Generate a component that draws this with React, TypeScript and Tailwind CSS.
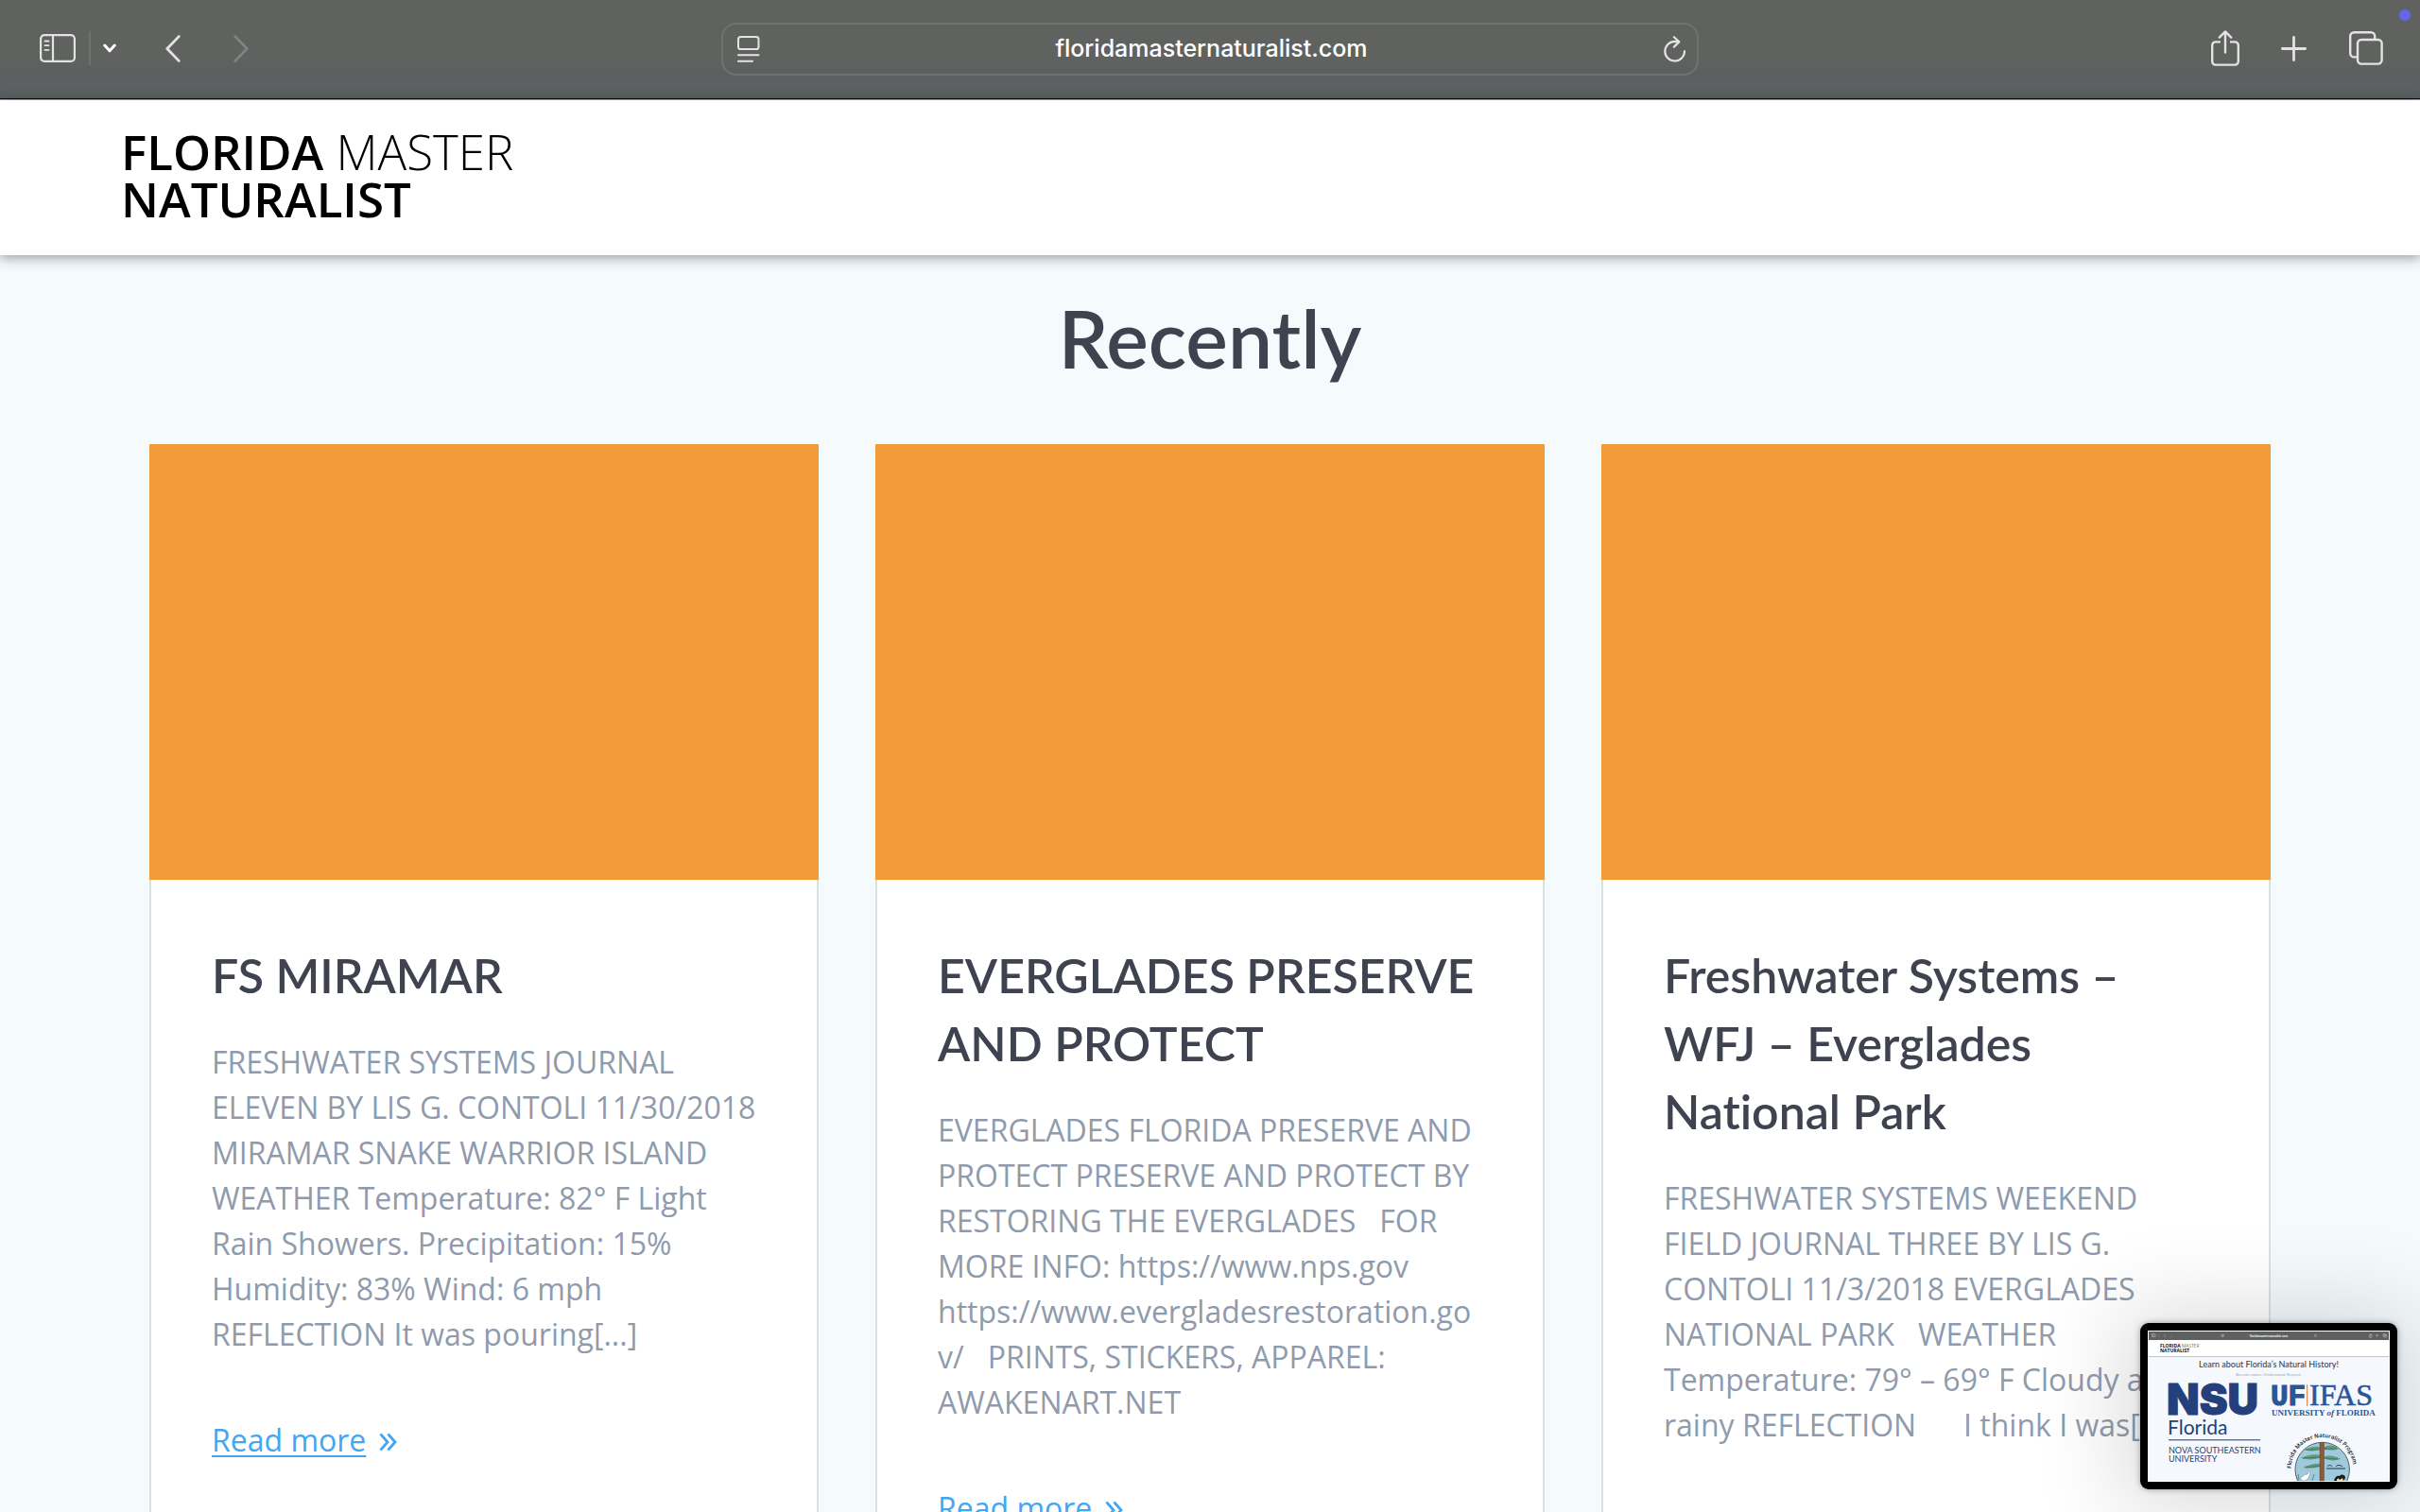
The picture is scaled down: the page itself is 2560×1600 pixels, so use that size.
import type { ReactNode } from "react";

type Post = { title: string; body: ReactNode };

const NB = "\u00a0";

const posts: Post[] = [
  {
    title: "FS MIRAMAR",
    body: "FRESHWATER SYSTEMS JOURNAL ELEVEN BY LIS G. CONTOLI 11/30/2018 MIRAMAR SNAKE WARRIOR ISLAND WEATHER Temperature: 82° F Light Rain Showers. Precipitation: 15% Humidity: 83% Wind: 6 mph REFLECTION It was pouring[...]",
  },
  {
    title: "EVERGLADES PRESERVE AND PROTECT",
    body: (
      <>
        EVERGLADES FLORIDA PRESERVE AND PROTECT PRESERVE AND PROTECT BY RESTORING THE EVERGLADES{NB}{NB} FOR MORE
        INFO: https://www.nps.gov
        <br />
        <span className="break-all">https://www.evergladesrestoration.gov/</span>
        {NB}{NB} PRINTS, STICKERS, APPAREL: AWAKENART.NET
      </>
    ),
  },
  {
    title: "Freshwater Systems – WFJ – Everglades National Park",
    body: `FRESHWATER SYSTEMS WEEKEND FIELD JOURNAL THREE BY LIS G. CONTOLI 11/3/2018 EVERGLADES NATIONAL PARK${NB}${NB} WEATHER Temperature: 79° – 69° F Cloudy and rainy REFLECTION${NB}${NB}${NB}${NB}${NB} I think I was[...]`,
  },
];

function BrowserBar() {
  return (
    <div className="grid h-[106px] shrink-0 grid-cols-[1fr_1034px_1fr] items-center border-b border-[#a9aba8] bg-linear-to-b from-[#606260] from-60% to-[#5c6061] to-70% pb-px text-[#e2e3e2] shadow-[inset_0_-1px_0_#0b0b0b]">
      <div className="flex items-center pb-[2px] pl-[42px]">
        <button aria-label="Show sidebar" className="block">
          <svg width="38" height="30" viewBox="0 0 38 30" fill="none" stroke="currentColor" strokeWidth="2.2" strokeLinecap="round">
            <rect x="1.1" y="1.1" width="35.8" height="27.8" rx="4" />
            <path d="M14 1v28" />
            <path d="M5.5 7.5h4M5.5 12.2h4M5.5 16.8h4" strokeWidth="1.8" />
          </svg>
        </button>
        <span className="ml-[14px] h-9 w-0.5 bg-[#707271]" />
        <button aria-label="Tab group menu" className="ml-[13px] block text-white">
          <svg width="14" height="10" viewBox="0 0 14 10" fill="none" stroke="currentColor" strokeWidth="3" strokeLinecap="round" strokeLinejoin="round">
            <path d="M1.8 2 7 7.8 12.2 2" />
          </svg>
        </button>
        <button aria-label="Back" className="ml-[52px] block">
          <svg width="16" height="29" viewBox="0 0 16 29" fill="none" stroke="currentColor" strokeWidth="2.8" strokeLinecap="round" strokeLinejoin="round">
            <path d="M14.2 1.6 1.8 14.5 14.2 27.4" />
          </svg>
        </button>
        <button aria-label="Forward" disabled className="ml-[56px] block text-[#828483]">
          <svg width="16" height="29" viewBox="0 0 16 29" fill="none" stroke="currentColor" strokeWidth="2.8" strokeLinecap="round" strokeLinejoin="round">
            <path d="M1.8 1.6 14.2 14.5 1.8 27.4" />
          </svg>
        </button>
      </div>

      <div className="flex h-14 items-center rounded-2xl border-2 border-[#707271] pl-[15px] pr-3">
        <button aria-label="Page menu" className="block shrink-0">
          <svg width="24" height="28" viewBox="0 0 24 28" fill="none" stroke="currentColor" strokeWidth="2" strokeLinecap="round">
            <rect x="1" y="1" width="21.5" height="13" rx="2.6" />
            <path d="M1 20.2h21.5M1 26.8h15" />
          </svg>
        </button>
        <input
          aria-label="Address"
          readOnly
          value="floridamasternaturalist.com"
          className="min-w-0 flex-1 bg-transparent text-center font-['Inter',sans-serif] text-[25px] font-medium text-white outline-none"
        />
        <button aria-label="Reload" className="block shrink-0">
          <svg width="24" height="28" viewBox="0 0 24 28" fill="none" stroke="currentColor" strokeWidth="2.2" strokeLinecap="round" strokeLinejoin="round">
            <path d="M16.6 6.1 12.600 5.900A10.3 10.3 0 0 0 2.3 16.200 10.3 10.3 0 0 0 12.7 26.5 10.4 10.4 0 0 0 23 16.200" />
            <path d="M11.9 1.2 17.3 6.2 11.9 11.6" />
          </svg>
        </button>
      </div>

      <div className="flex items-center justify-end pr-[39px] pb-[2px]">
        <button aria-label="Share" className="block">
          <svg width="30" height="38" viewBox="0 0 30 38" fill="none" stroke="currentColor" strokeWidth="2.4" strokeLinecap="round" strokeLinejoin="round">
            <path d="M10 12.4H4.8A3.6 3.6 0 0 0 1.2 16v17a3.6 3.6 0 0 0 3.6 3.6h20.4a3.6 3.6 0 0 0 3.6-3.6V16a3.6 3.6 0 0 0-3.6-3.6H20" strokeLinecap="butt" />
            <path d="M15 23.5V1.8M8.8 7.6 15 1.4l6.2 6.2" />
          </svg>
        </button>
        <button aria-label="New tab" className="ml-11 block">
          <svg width="27" height="27" viewBox="0 0 27 27" fill="none" stroke="currentColor" strokeWidth="2.8" strokeLinecap="round">
            <path d="M13.5 1.4v24.2M1.4 13.5h24.2" />
          </svg>
        </button>
        <button aria-label="Show all tabs" className="ml-[45px] block">
          <svg width="36" height="36" viewBox="0 0 36 36" fill="none" stroke="currentColor" strokeWidth="2.4" strokeLinejoin="round">
            <path d="M9 27.4H5.2a4 4 0 0 1-4-4V5.2a4 4 0 0 1 4-4h18a4 4 0 0 1 4 4V9" />
            <rect x="9" y="9" width="25.6" height="25.6" rx="4" />
          </svg>
        </button>
      </div>
    </div>
  );
}

function SiteHeader() {
  return (
    <header className="relative z-10 shrink-0 bg-white px-32 pt-[29px] pb-[35px] shadow-[0_2px_12px_1px_rgba(23,32,42,0.42)]">
      <a href="#home" className="block font-['Open_Sans',sans-serif] text-[51px] leading-[50px] font-semibold text-black">
        FLORIDA <span className="font-light">MASTER</span>
        <br />
        NATURALIST
      </a>
    </header>
  );
}

function PostCard({ title, body }: Post) {
  return (
    <article className="flex flex-col">
      <div className="h-[461px] bg-[#f29b38]" />
      <div className="flex-1 border-x-2 border-[#dde0e3] bg-white px-16 pt-[65px] pb-16">
        <h3 className="font-['Lato',sans-serif] text-[50px] leading-[72px] font-semibold text-[#3f4350] [font-variant-ligatures:none]">
          {title}
        </h3>
        <p className="mt-8 text-[32px] leading-[48px] text-[#8f9bac]">{body}</p>
        <div className="mt-16 flex items-center gap-[14px] text-[32px] leading-[48px] text-[#44a5f1]">
          <a href="#read" className="underline decoration-2 underline-offset-[4px]">
            Read more
          </a>
          <svg width="19" height="20" viewBox="0 0 19 20" fill="none" stroke="currentColor" strokeWidth="2.8" className="mt-1">
            <path d="M1.5 1.5 9 10l-7.500 8.500M9.500 1.500 17 10l-7.500 8.500" />
          </svg>
        </div>
      </div>
    </article>
  );
}

function ScreenshotPreview() {
  return (
    <button
      aria-label="Screenshot preview"
      className="absolute right-6 bottom-6 z-20 block rounded-[9px] bg-black p-2 shadow-[0_4px_90px_24px_rgba(0,0,0,0.13),0_0_6px_rgba(0,0,0,0.35)]"
    >
      <svg width="256" height="160" viewBox="0 0 256 160" className="block">
        <defs>
          <clipPath id="seal">
            <circle cx="184.700" cy="147" r="28.500" />
          </clipPath>
          <clipPath id="screen">
            <rect x="1" y="1" width="254" height="158" />
          </clipPath>
          <path id="sealArc" d="M151.700 146A33 33 0 0 1 217.700 146" />
        </defs>
        <rect width="256" height="160" fill="#fff" />
        <rect x="1" y="1" width="254" height="158" fill="#f5f9fd" />
        <rect x="1" y="1" width="254" height="9" fill="#5f6160" />
        <rect x="1" y="10" width="254" height="17" fill="#fff" />
        <rect x="1" y="27" width="254" height="1" fill="#c3c6c9" />

        <g fill="none" stroke="#b4b6b5" strokeWidth=".6">
          <rect x="4.500" y="3.800" width="3.500" height="2.800" />
          <path d="M5.800 3.800v2.800M11 5l.7.700.7-.700M18.800 3.700 17.300 5.200l1.500 1.500" />
          <path d="M24.500 3.700 26 5.200l-1.500 1.500" stroke="#7d7f7e" />
          <path d="M78 4h2.400v1.500H78zM78 6.500h2.400" />
          <circle cx="177.500" cy="5.300" r="1.100" />
          <path d="M234.500 4.500h2.500v2.800h-2.500zM235.700 3v2.800M241 5.200h2.800M242.400 3.800v2.800M249 3.700h2.300v2.300H249zM250 4.700h2.400V7H250z" />
        </g>
        <text x="128" y="6.500" textAnchor="middle" fontFamily="Inter" fontSize="3" fontWeight="600" fill="#fff">floridamasternaturalist.com</text>

        <g fontFamily="Open Sans" fontSize="5" fill="#111">
          <text x="13" y="18"><tspan fontWeight="700">FLORIDA</tspan><tspan fontWeight="300"> MASTER</tspan></text>
          <text x="13" y="23" fontWeight="700">NATURALIST</text>
        </g>
        <text x="128" y="38.500" textAnchor="middle" fontFamily="Lato" fontSize="9" fontWeight="500" fill="#3f4350">Learn about Florida’s Natural History!</text>
        <text x="128" y="48" textAnchor="middle" fontFamily="Open Sans" fontSize="4" fill="#8c98a8">Become aware. Understand. Respect.</text>

        <g fill="#233f7c">
          <text x="20" y="88.500" fontFamily="Inter" fontSize="45" fontWeight="900" stroke="#233f7c" strokeWidth="1">NSU</text>
          <text x="21" y="109.500" fontFamily="Lato" fontSize="21">Florida</text>
          <rect x="22" y="115" width="97" height="1.400" fill="#5570a3" />
          <text x="22" y="129.500" fontFamily="Lato" fontSize="9">NOVA SOUTHEASTERN</text>
          <text x="22" y="138.500" fontFamily="Lato" fontSize="9">UNIVERSITY</text>
        </g>

        <g fill="#2b5597">
          <text x="130" y="78.500" fontFamily="Liberation Mono" fontSize="31" fontWeight="700" stroke="#2b5597" strokeWidth="1.200">UF</text>
          <rect x="168" y="57" width="1.200" height="23" fill="#e58a56" />
          <text x="171" y="78.500" fontFamily="Liberation Serif" fontSize="32" stroke="#2b5597" strokeWidth=".6">IFAS</text>
          <text x="131" y="90" fontFamily="Liberation Serif" fontSize="9" fontWeight="700">
            UNIVERSITY <tspan fontStyle="italic">of</tspan> FLORIDA
          </text>
        </g>

        <text fontFamily="Open Sans" fontSize="6" fontWeight="600" fill="#111">
          <textPath href="#sealArc">Florida Master Naturalist Program</textPath>
        </text>
        <g clipPath="url(#seal)">
          <rect x="150" y="110" width="70" height="49" fill="#9fcadd" />
          <path d="M184 124c-7-3-13 0-19 2 5 2 13 2 19-1zM184 132c-8-2-16 0-22 3 7 2 15 2 22-1zM184 141c-7-1-14 1-20 4 7 1 14 1 20-2zM186 124c5-4 12-3 16 1-5 2-11 2-16 0zM186 134c6-3 13-1 18 2-6 2-12 2-18-1z" fill="#5f9c7d" />
          <path d="M184 126l-17 0M184 134l-20 1M184 143l-17 2M186 125l14 0M186 135l15 1" stroke="#3d6a58" strokeWidth=".7" />
          <rect x="182" y="117" width="4.500" height="42" fill="#8b5d3c" stroke="#4e3524" strokeWidth=".4" />
          <path d="M190 144c1-2 4-2 5 0M199 144c1-2 5-2 7 0M189 146h20" fill="none" stroke="#27343d" strokeWidth="1" />
          <path d="M161 156c3-1 4-4 8-4l2-4 1 1-1 5c-1 3-4 5-7 5z" fill="#fff" stroke="#5b6b73" strokeWidth=".4" />
          <path d="M158 159l-2-6M160 159l-1-7M174 159l2-7" stroke="#3c6d78" strokeWidth=".7" />
          <path d="M197 159c1-4 3-6 6-5 2-3 6-1 6 2l-2 3z" fill="#1a1a1a" />
          <path d="M200 159c0-3 2-3 3-1l3-2 1 3z" fill="#efd9ae" />
          <circle cx="187.500" cy="125" r="1" fill="#c8382e" />
        </g>
        <circle cx="184.700" cy="147" r="28.700" fill="none" stroke="#2e3a40" strokeWidth=".8" clipPath="url(#screen)" />
      </svg>
    </button>
  );
}

export default function App() {
  return (
    <div className="relative flex h-screen flex-col overflow-hidden bg-[#f5fafd] font-['Open_Sans',sans-serif]">
      <BrowserBar />
      <span className="absolute top-[10px] right-[10px] size-3 rounded-full bg-[#6366eb]" />
      <SiteHeader />
      <main className="min-h-0 flex-1 overflow-hidden px-[158px] pt-[38px]">
        <h2 className="text-center font-['Lato',sans-serif] text-[84px] leading-[100px] font-semibold text-[#3f4350]">
          Recently
        </h2>
        <section className="mt-[62px] grid grid-cols-3 gap-[60px]">
          {posts.map((post) => (
            <PostCard key={post.title} {...post} />
          ))}
        </section>
      </main>
      <ScreenshotPreview />
    </div>
  );
}
